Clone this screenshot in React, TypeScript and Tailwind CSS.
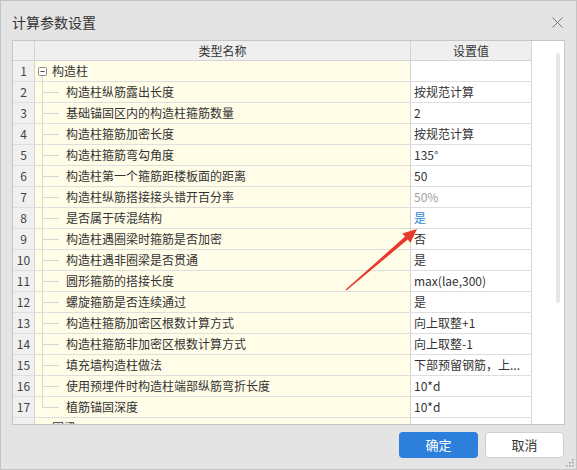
import React from 'react';

type Row = {
  no: number;
  name: string;
  value?: string;
  group?: boolean;
  tone?: 'grey' | 'blue';
};

const rows: Row[] = [
  { no: 1, name: '构造柱', group: true },
  { no: 2, name: '构造柱纵筋露出长度', value: '按规范计算' },
  { no: 3, name: '基础锚固区内的构造柱箍筋数量', value: '2' },
  { no: 4, name: '构造柱箍筋加密长度', value: '按规范计算' },
  { no: 5, name: '构造柱箍筋弯勾角度', value: '135°' },
  { no: 6, name: '构造柱第一个箍筋距楼板面的距离', value: '50' },
  { no: 7, name: '构造柱纵筋搭接接头错开百分率', value: '50%', tone: 'grey' },
  { no: 8, name: '是否属于砖混结构', value: '是', tone: 'blue' },
  { no: 9, name: '构造柱遇圈梁时箍筋是否加密', value: '否' },
  { no: 10, name: '构造柱遇非圈梁是否贯通', value: '是' },
  { no: 11, name: '圆形箍筋的搭接长度', value: 'max(lae,300)' },
  { no: 12, name: '螺旋箍筋是否连续通过', value: '是' },
  { no: 13, name: '构造柱箍筋加密区根数计算方式', value: '向上取整+1' },
  { no: 14, name: '构造柱箍筋非加密区根数计算方式', value: '向上取整-1' },
  { no: 15, name: '填充墙构造柱做法', value: '下部预留钢筋，上...' },
  { no: 16, name: '使用预埋件时构造柱端部纵筋弯折长度', value: '10*d' },
  { no: 17, name: '植筋锚固深度', value: '10*d' },
  { no: 18, name: '圈梁', group: true },
];

function TreeBranch({ last }: { last: boolean }) {
  // connector lines for child rows
  return (
    <svg width="26" height="20" className="shrink-0">
      <line x1="7.5" y1="-1" x2="7.5" y2={last ? 10.5 : 21} stroke="#d6d6d6" strokeWidth="1" />
      <line x1="7.5" y1="10.5" x2="24" y2="10.5" stroke="#d6d6d6" strokeWidth="1" />
    </svg>
  );
}

function GroupToggle({ open }: { open: boolean }) {
  return (
    <svg width="14" height="20" className="shrink-0">
      {open && <line x1="7.5" y1="15" x2="7.5" y2="21" stroke="#d6d6d6" strokeWidth="1" />}
      <rect x="3.5" y="6.5" width="8" height="8" rx="1" fill="#fff" stroke="#8a8a8a" strokeWidth="1" />
      <line x1="5.5" y1="10.5" x2="9.5" y2="10.5" stroke="#444" strokeWidth="1" />
    </svg>
  );
}

export default function App() {
  return (
    <div
      className="relative w-[577px] h-[470px] bg-[#e4e4e4] border border-[#c4c4c4] flex flex-col overflow-hidden text-[#333]"
      style={{ fontFamily: '"Noto Sans CJK SC", "Noto Sans", sans-serif' }}
    >
      {/* title bar */}
      <div className="h-[39px] shrink-0 flex items-center justify-between pl-[11px] pr-[13px]">
        <span className="text-[14px] leading-none pt-[3px] text-[#333]">计算参数设置</span>
        <svg width="11" height="11" viewBox="0 0 11 11" className="mt-[4px]">
          <line x1="0.5" y1="0.5" x2="10.5" y2="10.5" stroke="#777" strokeWidth="1" />
          <line x1="10.5" y1="0.5" x2="0.5" y2="10.5" stroke="#777" strokeWidth="1" />
        </svg>
      </div>

      {/* table */}
      <div className="mx-[11px] h-[385px] shrink-0 border border-[#c6c6c6] bg-white flex overflow-hidden text-[12px]">
        <div className="w-[519px] flex flex-col">
          <div className="flex h-[20px] shrink-0 border-b border-[#d4d4d4] bg-[#efefef]">
            <div className="w-[22px] border-r border-[#d4d4d4]" />
            <div className="w-[376px] border-r border-[#d4d4d4] flex items-center justify-center">类型名称</div>
            <div className="w-[121px] border-r border-[#d4d4d4] flex items-center justify-center">设置值</div>
          </div>
          {rows.map((r) => (
            <div key={r.no} className="flex h-[21px] shrink-0 border-b border-[#dedede]">
              <div className="w-[22px] border-r border-[#d4d4d4] bg-[#f0f0f0] flex items-center justify-center text-[#444]">
                {r.no}
              </div>
              <div className="w-[376px] border-r border-[#d4d4d4] bg-[#fffce7] flex items-center whitespace-nowrap">
                {r.group ? (
                  <>
                    <GroupToggle open={r.no === 1} />
                    <span className="ml-[3px]">{r.name}</span>
                  </>
                ) : (
                  <>
                    <TreeBranch last={r.no === 17} />
                    <span className="ml-[5px]">{r.name}</span>
                  </>
                )}
              </div>
              <div
                className={
                  'w-[121px] border-r border-[#d4d4d4] flex items-center pl-[3px] whitespace-nowrap overflow-hidden ' +
                  (r.tone === 'grey' ? 'text-[#a0a0a0]' : r.tone === 'blue' ? 'text-[#2f86d6]' : 'text-[#333]')
                }
              >
                {r.value}
              </div>
            </div>
          ))}
        </div>
        {/* scroll gutter */}
        <div className="flex-1 bg-white">
          <div className="mt-[12px] ml-[24px] w-[4px] h-[250px] rounded-full bg-[#e6e6e6]" />
        </div>
      </div>

      {/* buttons */}
      <div className="flex justify-end gap-[7px] mt-[7px] pr-[12px]">
        <button className="w-[79px] h-[26px] rounded-[4px] bg-[#2d7fdc] text-white text-[13px]">确定</button>
        <button className="w-[79px] h-[26px] rounded-[4px] bg-white border border-[#cfcfcf] text-[#333] text-[13px]">
          取消
        </button>
      </div>

      {/* resize grip */}
      <svg width="9" height="9" className="absolute right-[2px] bottom-[2px]">
        <rect x="7" y="1" width="1.5" height="1.5" fill="#999" />
        <rect x="4" y="4" width="1.5" height="1.5" fill="#999" />
        <rect x="7" y="4" width="1.5" height="1.5" fill="#999" />
        <rect x="1" y="7" width="1.5" height="1.5" fill="#999" />
        <rect x="4" y="7" width="1.5" height="1.5" fill="#999" />
        <rect x="7" y="7" width="1.5" height="1.5" fill="#999" />
      </svg>

      {/* red annotation arrow */}
      <svg width="577" height="470" className="absolute left-0 top-0 pointer-events-none">
        <polygon
          points="344.6,288.4 404.1,235.6 401.3,232.4 416,228 409.5,241.8 406.7,238.6 345.4,289.6"
          fill="#e8392c"
        />
      </svg>
    </div>
  );
}
